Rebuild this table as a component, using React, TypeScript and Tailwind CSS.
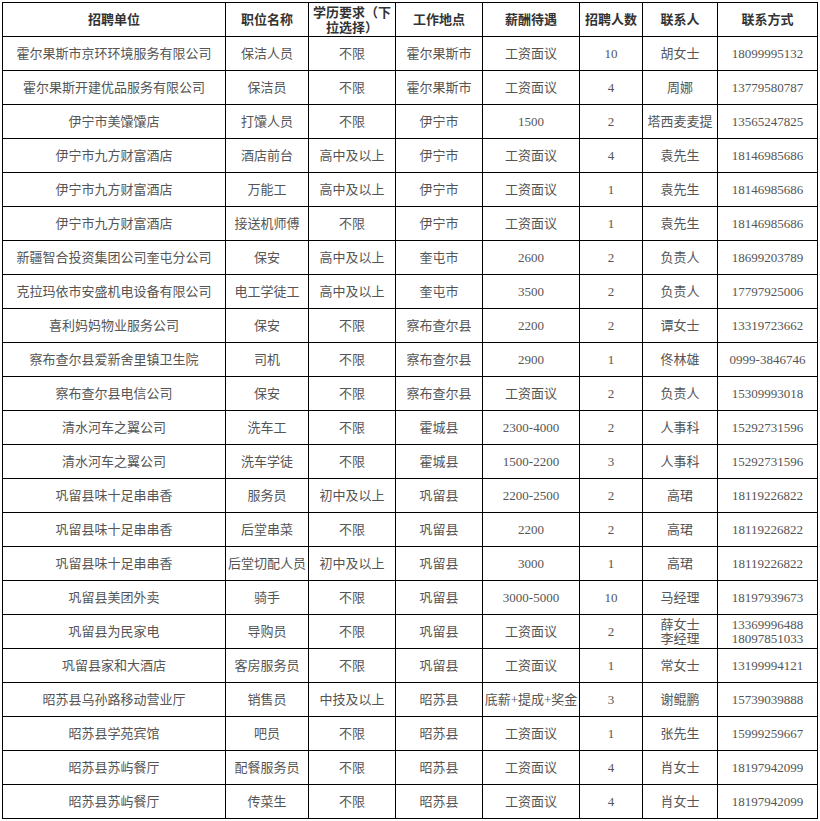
import * as React from "react";

// 招聘信息表
const rows: string[][] = [
    ["霍尔果斯市京环环境服务有限公司", "保洁人员", "不限", "霍尔果斯市", "工资面议", "10", "胡女士", "18099995132"],
    ["霍尔果斯开建优品服务有限公司", "保洁员", "不限", "霍尔果斯市", "工资面议", "4", "周娜", "13779580787"],
    ["伊宁市美馕馕店", "打馕人员", "不限", "伊宁市", "1500", "2", "塔西麦麦提", "13565247825"],
    ["伊宁市九方财富酒店", "酒店前台", "高中及以上", "伊宁市", "工资面议", "4", "袁先生", "18146985686"],
    ["伊宁市九方财富酒店", "万能工", "高中及以上", "伊宁市", "工资面议", "1", "袁先生", "18146985686"],
    ["伊宁市九方财富酒店", "接送机师傅", "不限", "伊宁市", "工资面议", "1", "袁先生", "18146985686"],
    ["新疆智合投资集团公司奎屯分公司", "保安", "高中及以上", "奎屯市", "2600", "2", "负责人", "18699203789"],
    ["克拉玛依市安盛机电设备有限公司", "电工学徒工", "高中及以上", "奎屯市", "3500", "2", "负责人", "17797925006"],
    ["喜利妈妈物业服务公司", "保安", "不限", "察布查尔县", "2200", "2", "谭女士", "13319723662"],
    ["察布查尔县爱新舍里镇卫生院", "司机", "不限", "察布查尔县", "2900", "1", "佟林雄", "0999-3846746"],
    ["察布查尔县电信公司", "保安", "不限", "察布查尔县", "工资面议", "2", "负责人", "15309993018"],
    ["清水河车之翼公司", "洗车工", "不限", "霍城县", "2300-4000", "2", "人事科", "15292731596"],
    ["清水河车之翼公司", "洗车学徒", "不限", "霍城县", "1500-2200", "3", "人事科", "15292731596"],
    ["巩留县味十足串串香", "服务员", "初中及以上", "巩留县", "2200-2500", "2", "高珺", "18119226822"],
    ["巩留县味十足串串香", "后堂串菜", "不限", "巩留县", "2200", "2", "高珺", "18119226822"],
    ["巩留县味十足串串香", "后堂切配人员", "初中及以上", "巩留县", "3000", "1", "高珺", "18119226822"],
    ["巩留县美团外卖", "骑手", "不限", "巩留县", "3000-5000", "10", "马经理", "18197939673"],
    ["巩留县为民家电", "导购员", "不限", "巩留县", "工资面议", "2", "薛女士\n李经理", "13369996488\n18097851033"],
    ["巩留县家和大酒店", "客房服务员", "不限", "巩留县", "工资面议", "1", "常女士", "13199994121"],
    ["昭苏县乌孙路移动营业厅", "销售员", "中技及以上", "昭苏县", "底薪+提成+奖金", "3", "谢鲲鹏", "15739039888"],
    ["昭苏县学苑宾馆", "吧员", "不限", "昭苏县", "工资面议", "1", "张先生", "15999259667"],
    ["昭苏县苏屿餐厅", "配餐服务员", "不限", "昭苏县", "工资面议", "4", "肖女士", "18197942099"],
    ["昭苏县苏屿餐厅", "传菜生", "不限", "昭苏县", "工资面议", "4", "肖女士", "18197942099"],
];

const headers = ["招聘单位", "职位名称", "学历要求（下拉选择）", "工作地点", "薪酬待遇", "招聘人数", "联系人", "联系方式"];

export default function App() {
    return (
        <div className="bg-white pt-[2px] pl-[2px] min-h-screen" style={{ fontFamily: '"Liberation Serif", "Noto Sans CJK SC", serif' }}>
            <table className="table-fixed border-collapse w-[815px] text-[13px] text-[#555]">
                <colgroup>
                    <col className="w-[223px]" />
                    <col className="w-[83px]" />
                    <col className="w-[87px]" />
                    <col className="w-[87px]" />
                    <col className="w-[97px]" />
                    <col className="w-[63px]" />
                    <col className="w-[75px]" />
                    <col className="w-[100px]" />
                </colgroup>
                <thead>
                    <tr className="h-[34px]">
                        {headers.map((h) => (
                            <th key={h} className="border border-black px-[2px] py-0 font-bold text-[#333] leading-[15px] text-center">
                                {h}
                            </th>
                        ))}
                    </tr>
                </thead>
                <tbody>
                    {rows.map((r, i) => (
                        <tr key={i} className="h-[34px]">
                            {r.map((c, j) => (
                                <td key={j} className="border border-black px-0 py-0 text-center leading-[14px] whitespace-pre">
                                    {c}
                                </td>
                            ))}
                        </tr>
                    ))}
                </tbody>
            </table>
        </div>
    );
}
